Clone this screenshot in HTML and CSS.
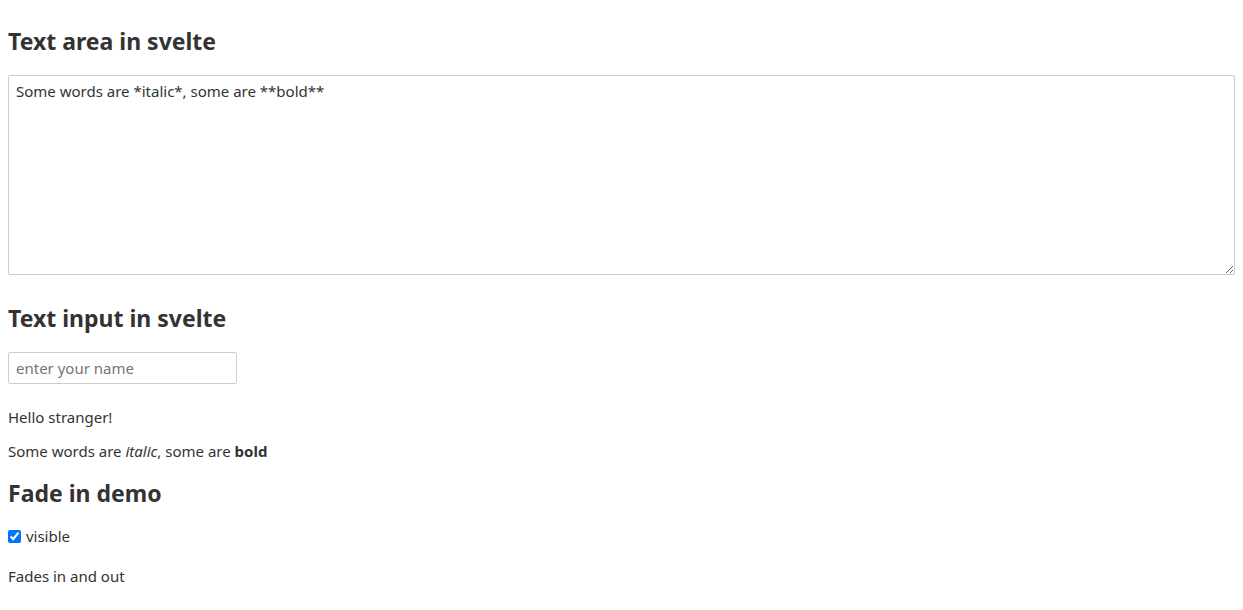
FILE: index.html
```html
<!DOCTYPE html>
<html>
<head>
<meta charset="utf-8">
<link rel="stylesheet" href="styles.css">
</head>
<body>
<h2>Text area in svelte</h2>
<textarea class="area">Some words are *italic*, some are **bold**</textarea>
<h2>Text input in svelte</h2>
<input class="name" type="text" placeholder="enter your name">
<p>Hello stranger!</p>
<p>Some words are <em>italic</em>, some are <strong>bold</strong></p>
<h2>Fade in demo</h2>
<label class="check"><input type="checkbox" checked> visible</label>
<p>Fades in and out</p>
</body>
</html>
```

FILE: styles.css
```css
html, body { margin: 0; }
body {
  color: #333;
  padding: 8px;
  font-family: "Noto Sans", sans-serif;
  font-size: 15px;
  line-height: 18px;
}
h2 {
  font-size: 23px;
  line-height: 28px;
  font-weight: 700;
  margin: 19px 0 20px;
}
p { margin: 16px 0; }
textarea, input {
  font-family: inherit;
  font-size: inherit;
  color: #333;
  border: 1px solid #ccc;
  border-radius: 2px;
  box-sizing: border-box;
}
.area {
  display: block;
  width: 100%;
  height: 200px;
  padding: 6px 7px;
  margin: 0 0 29px 0;
  line-height: 18px;
}
.name {
  display: block;
  width: 229px;
  height: 32px;
  padding: 6px 7px;
  margin: 0 0 24px;
}
.name::placeholder { color: #757575; }
.check { display: block; margin-top: 0; }
.check input {
  margin: 0 1px 0 0;
  width: 13px;
  height: 13px;
  vertical-align: -1px;
}
.check + p { margin-top: 22px; }
```
